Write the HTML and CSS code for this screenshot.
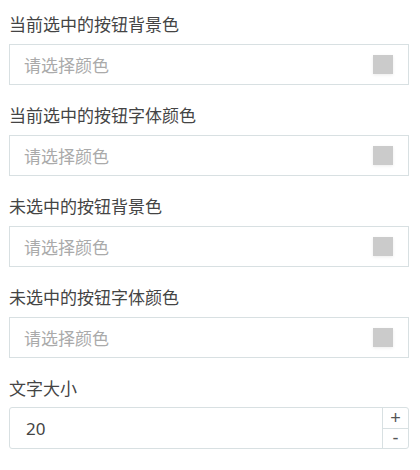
FILE: index.html
```html
<!DOCTYPE html>
<html lang="zh-CN">

<head>
    <meta charset="UTF-8">
    <meta name="viewport" content="width=device-width, initial-scale=1.0">
    <title>按钮样式设置</title>
    <link rel="stylesheet" href="styles.css">
</head>

<body>
    <div class="form">
        <div class="field">
            <label class="field-label">当前选中的按钮背景色</label>
            <div class="color-input">
                <span class="placeholder">请选择颜色</span>
                <span class="swatch"></span>
            </div>
        </div>

        <div class="field">
            <label class="field-label">当前选中的按钮字体颜色</label>
            <div class="color-input">
                <span class="placeholder">请选择颜色</span>
                <span class="swatch"></span>
            </div>
        </div>

        <div class="field">
            <label class="field-label">未选中的按钮背景色</label>
            <div class="color-input">
                <span class="placeholder">请选择颜色</span>
                <span class="swatch"></span>
            </div>
        </div>

        <div class="field">
            <label class="field-label">未选中的按钮字体颜色</label>
            <div class="color-input">
                <span class="placeholder">请选择颜色</span>
                <span class="swatch"></span>
            </div>
        </div>

        <div class="field">
            <label class="field-label">文字大小</label>
            <div class="number-input">
                <span class="number-value">20</span>
                <div class="stepper">
                    <span class="step">+</span>
                    <span class="step">-</span>
                </div>
            </div>
        </div>
    </div>
</body>

</html>
```

FILE: styles.css
```css
body {
    margin: 0;
    padding: 0 11px 0 9px;
    background-color: #fff;
    font-family: "Noto Sans", "Noto Sans CJK SC", sans-serif;
    color: #444;
}

.field {
    padding: 13px 0 6px;
}

.field-label {
    display: block;
    font-size: 17px;
    line-height: 24px;
    color: #444;
    margin-bottom: 7px;
}

.color-input {
    display: flex;
    align-items: center;
    justify-content: space-between;
    height: 41px;
    box-sizing: border-box;
    border: 1px solid #d8e0e2;
    padding: 0 15px 0 14px;
}

.placeholder {
    font-size: 17px;
    color: #aaa;
}

.swatch {
    width: 20px;
    height: 19px;
    background-color: #cbcbcb;
    box-shadow: 0 1px 3px rgba(0, 0, 0, 0.08);
}

.number-input {
    display: flex;
    height: 42px;
    box-sizing: border-box;
    border: 1px solid #d8e0e2;
    border-radius: 3px;
    margin-top: -1px;
}

.number-value {
    flex: 1;
    display: flex;
    align-items: center;
    padding-left: 16px;
    font-size: 17px;
    color: #444;
}

.stepper {
    width: 25px;
    display: flex;
    flex-direction: column;
    border-left: 1px solid #d8e0e2;
}

.step {
    flex: 1;
    display: flex;
    align-items: center;
    justify-content: center;
    font-family: "Liberation Sans", sans-serif;
    font-size: 18px;
    line-height: 1;
    color: #555;
}

.step + .step {
    border-top: 1px solid #d8e0e2;
}
```
